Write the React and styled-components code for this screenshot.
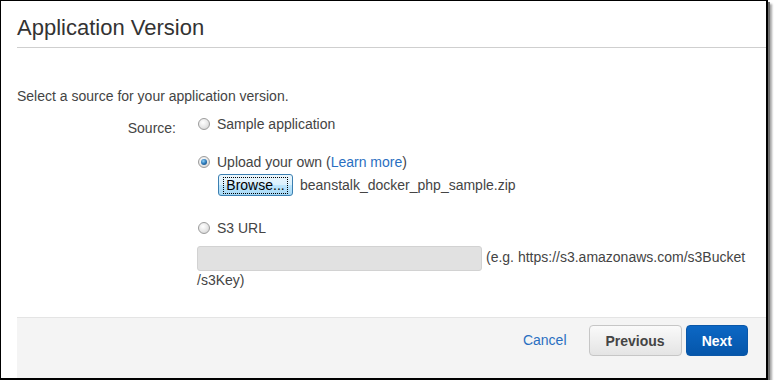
import React from "react";
import styled, { createGlobalStyle } from "styled-components";

const GlobalStyle = createGlobalStyle`
  body {
    margin: 0;
    background: #fff;
    font-family: "Liberation Sans", Arial, sans-serif;
  }
`;

const App = () => {
  return (
    <>
      <GlobalStyle />
      <Frame>
        <Header>
          <Title>Application Version</Title>
        </Header>

        <Intro>Select a source for your application version.</Intro>

        <FormRow>
          <FieldLabel>Source:</FieldLabel>
          <Options>
            <Option>
              <Radio />
              <OptionText>Sample application</OptionText>
            </Option>

            <Option gap={20}>
              <Radio checked />
              <OptionText>
                Upload your own (<Link>Learn more</Link>)
              </OptionText>
            </Option>
            <UploadRow>
              <BrowseButton>
                <span>Browse...</span>
              </BrowseButton>
              <FileName>beanstalk_docker_php_sample.zip</FileName>
            </UploadRow>

            <Option gap={23}>
              <Radio />
              <OptionText>S3 URL</OptionText>
            </Option>
            <UrlLine>
              <UrlInput />
              <Hint>
                (e.g. https://s3.amazonaws.com/s3Bucket<wbr />/s3Key)
              </Hint>
            </UrlLine>
          </Options>
        </FormRow>

        <Footer>
          <CancelLink>Cancel</CancelLink>
          <Button pad={16}>Previous</Button>
          <Button primary pad={15}>Next</Button>
        </Footer>
      </Frame>
    </>
  );
};

const Frame = styled.div`
  box-sizing: border-box;
  width: 768px;
  height: 380px;
  border: 1px solid #000;
  border-right-width: 2px;
  border-bottom-width: 2px;
  box-shadow: 2px 2px 0 #6f6f6f, 4px 4px 2px rgba(0, 0, 0, 0.35);
  padding-left: 16px;
  display: flex;
  flex-direction: column;
  background: #fff;
  color: #444;
`;

const Header = styled.div`
  padding-top: 14px;
  padding-bottom: 6px;
  border-bottom: 1px solid #cfcfcf;
`;

const Title = styled.h1`
  margin: 0;
  font-size: 22px;
  line-height: 26px;
  font-weight: normal;
  color: #333;
`;

const Intro = styled.p`
  margin: 39px 0 0;
  font-size: 14px;
  line-height: 18px;
`;

const FormRow = styled.div`
  display: grid;
  grid-template-columns: 159px 1fr;
  column-gap: 21px;
  margin-top: 10px;
  font-size: 14px;
  line-height: 18px;
`;

const FieldLabel = styled.div`
  text-align: right;
  padding-top: 4px;
`;

const Options = styled.div`
  display: flex;
  flex-direction: column;
`;

const Option = styled.label`
  display: flex;
  align-items: center;
  gap: 7px;
  margin-top: ${({ gap }) => gap || 0}px;
  padding-left: 1px;
`;

const Radio = styled.span`
  box-sizing: border-box;
  width: 12px;
  height: 12px;
  border-radius: 50%;
  border: 1px solid #9c9c9c;
  background: radial-gradient(circle at 40% 35%, #ffffff 0%, #e6e6e6 55%, #c9c9c9 100%);
  display: flex;
  align-items: center;
  justify-content: center;
  flex-shrink: 0;

  &::after {
    content: "";
    display: ${({ checked }) => (checked ? "block" : "none")};
    width: 6px;
    height: 6px;
    border-radius: 50%;
    background: radial-gradient(circle at 40% 35%, #8fd0f7 0%, #2a78b8 50%, #143e68 100%);
  }
`;

const OptionText = styled.span`
  color: #444;
`;

const Link = styled.a`
  color: #2a6fc1;
  cursor: pointer;
`;

const UploadRow = styled.div`
  display: flex;
  align-items: center;
  gap: 7px;
  margin-top: 3px;
  padding-left: 21px;
`;

const BrowseButton = styled.button`
  box-sizing: border-box;
  height: 22px;
  width: 75px;
  padding: 0;
  border: 1px solid #3c7fb1;
  border-radius: 3px;
  background: linear-gradient(#eaf6fd 0%, #d9f0fc 50%, #bee6fd 51%, #a7d9f5 100%);
  font-family: inherit;
  font-size: 14px;
  color: #000;
  display: flex;
  align-items: center;
  justify-content: center;

  span {
    padding: 0 2px;
    outline: 1px dotted #000;
    line-height: 15px;
  }
`;

const FileName = styled.span`
  color: #444;
`;

const UrlLine = styled.div`
  margin-top: 9px;
  line-height: 18px;
`;

const UrlInput = styled.span`
  display: inline-block;
  box-sizing: border-box;
  width: 285px;
  height: 25px;
  margin-right: 4px;
  border: 1px solid #d2d2d2;
  border-radius: 3px;
  background: #e1e1e1;
  vertical-align: middle;
`;

const Hint = styled.span`
  color: #444;
`;

const Footer = styled.div`
  margin-top: auto;
  height: 61px;
  box-sizing: border-box;
  border-top: 1px solid #e4e4e4;
  background: #f4f4f4;
  display: flex;
  align-items: flex-start;
  justify-content: flex-end;
  padding: 7px 18px 0 0;
`;

const CancelLink = styled.a`
  color: #2a6fc1;
  font-size: 14px;
  line-height: 31px;
  margin-right: 18px;
  cursor: pointer;
`;

const Button = styled.button`
  box-sizing: border-box;
  height: 31px;
  padding: 0 ${({ pad }) => pad}px;
  margin-left: 4px;
  border-radius: 4px;
  font-family: inherit;
  font-size: 14px;
  font-weight: bold;
  border: 1px solid ${({ primary }) => (primary ? "#0a57a8" : "#c6c6c6")};
  color: ${({ primary }) => (primary ? "#fff" : "#444")};
  background: ${({ primary }) =>
    primary
      ? "linear-gradient(#0c67c4, #0556aa)"
      : "linear-gradient(#fafafa, #e4e4e4)"};
`;

export default App;
